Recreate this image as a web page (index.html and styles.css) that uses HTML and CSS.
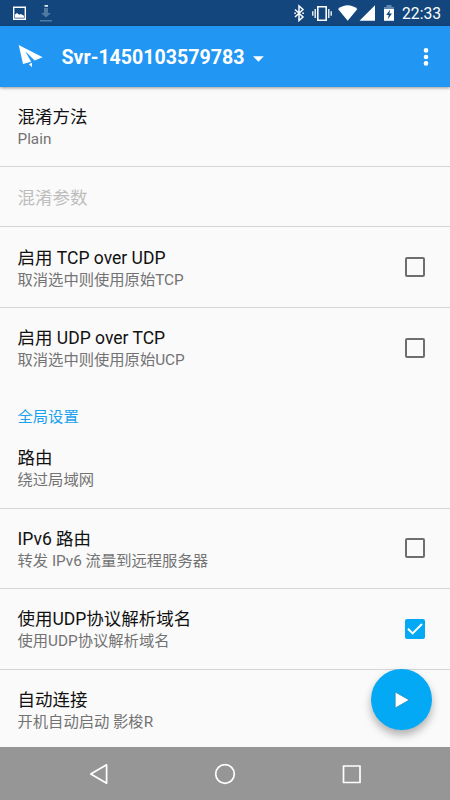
FILE: index.html
```html
<!DOCTYPE html>
<html lang="zh-CN">
<head>
<meta charset="utf-8">
<title>Svr-1450103579783</title>
<link rel="stylesheet" href="styles.css">
</head>
<body>
<div class="screen">
  <header class="status">
    <svg class="status-left" width="70" height="26" viewBox="0 0 70 26">
      <path d="M13.700 7.200h11.600v12H13.700z" fill="none" stroke="#fff" stroke-width="1.400"/>
      <path d="M15 17.800v-3.200l2-1.600 2.200 1.800 1.600-.8 3.200 1.800v2z" fill="#fff"/>
      <path d="M44 8h4v5h3l-5 4.500-5-4.500h3z" fill="#517aa3"/>
      <path d="M44.500 5h3.500v1.800h-3.500z" fill="#dce5ed"/>
      <path d="M40 20h12v1.500H40z" fill="#517aa3"/>
    </svg>
    <svg class="status-right" width="110" height="26" viewBox="290 0 110 26">
      <path d="M295 9.500l8 7.500-4 3.500V6l4 3.500-8 7.500" fill="none" stroke="#fff" stroke-width="1.500"/>
      <path d="M294.300 13.300h1.600M302.300 13.300h1.600" stroke="#fff" stroke-width="1.500"/>
      <path d="M317.800 6.800h8.400v13.400h-8.400z" fill="none" stroke="#fff" stroke-width="1.600"/>
      <path d="M315.200 9v9M312.800 11.200v4.600M328.800 9v9M331.200 11.200v4.600" stroke="#fff" stroke-width="1.300"/>
      <path d="M338 9q9.700-7.500 19.400 0l-9.700 11.700z" fill="#fff"/>
      <path d="M375 5.300v15.500h-15.500z" fill="#fff"/>
      <path d="M386.500 5h5v2h2.500v2h-10V7h2.500z" fill="#6488ad"/>
      <path d="M384 9h10v11.800h-10z" fill="#fff"/>
      <path d="M390.200 9.500l-4 5.500h2.500l-.8 4.300 4.100-5.700h-2.600z" fill="#12467d"/>
    </svg>
    <span class="clock">22:33</span>
  </header>
  <div class="toolbar">
    <svg class="logo" width="26" height="26" viewBox="0 0 26 26">
      <path d="M.7 1L24.700 13.200l-8 3.300L7.200 7.300l6 10.500-8.200 2.200z" fill="#fff"/>
      <path d="M10.800 20.300l3.200-1.500v4.500z" fill="#fff"/>
    </svg>
    <h1 class="profile">Svr-1450103579783</h1>
    <svg class="caret" width="11" height="6" viewBox="0 0 11 6"><path d="M0 .3h10.800L5.400 5.700z" fill="#fff"/></svg>
    <svg class="more" width="6" height="20" viewBox="0 0 6 20" fill="#fff"><circle cx="3" cy="3.400" r="2.300"/><circle cx="3" cy="10" r="2.300"/><circle cx="3" cy="16.400" r="2.300"/></svg>
  </div>
  <main class="list">
    <section class="row first"><div><p class="title">混淆方法</p><p class="sub">Plain</p></div></section>
    <section class="row short disabled"><div><p class="title">混淆参数</p></div></section>
    <section class="row low"><div><p class="title">启用 TCP over UDP</p><p class="sub">取消选中则使用原始TCP</p></div><span class="box"></span></section>
    <section class="row last"><div><p class="title">启用 UDP over TCP</p><p class="sub">取消选中则使用原始UCP</p></div><span class="box"></span></section>
    <h2 class="category">全局设置</h2>
    <section class="row"><div><p class="title">路由</p><p class="sub">绕过局域网</p></div></section>
    <section class="row tight"><div><p class="title">IPv6 路由</p><p class="sub">转发 IPv6 流量到远程服务器</p></div><span class="box"></span></section>
    <section class="row"><div><p class="title">使用UDP协议解析域名</p><p class="sub">使用UDP协议解析域名</p></div><span class="box checked"><svg width="20" height="20" viewBox="0 0 20 20"><path d="M3 9.800l4.600 4.600L17 5" fill="none" stroke="#fff" stroke-width="2"/></svg></span></section>
    <section class="row last"><div><p class="title">自动连接</p><p class="sub">开机自动启动 影梭R</p></div></section>
  </main>
  <nav class="nav">
    <svg width="450" height="53" viewBox="0 747 450 53" fill="none" stroke="#fff" stroke-width="1.700" stroke-linejoin="round">
      <path d="M106.600 764.800v18.400L90.800 774z"/>
      <circle cx="225" cy="774" r="9.300"/>
      <path d="M343.500 766h16.500v16.500h-16.500z"/>
    </svg>
  </nav>
  <div class="fab"><svg width="16" height="18" viewBox="0 0 16 18"><path d="M1.200 1v16L15.200 9z" fill="#fff" stroke="#2586b5" stroke-width=".7"/></svg></div>
</div>
</body>
</html>
```

FILE: styles.css
```css
* { box-sizing: border-box; margin: 0; padding: 0; }
body { width: 450px; height: 800px; overflow: hidden; }
.screen {
  position: relative;
  display: flex;
  flex-direction: column;
  height: 800px;
  background: #fafafa;
  font-family: Roboto, "Noto Sans CJK SC", sans-serif;
}
.status { display: flex; height: 26px; flex: none; background: #12467d; color: #fff; }
.status-right { margin-left: 220px; }
.clock { margin-left: 2px; font-size: 15.700px; line-height: 28px; }
.toolbar {
  z-index: 1;
  display: flex;
  align-items: center;
  flex: none;
  height: 61px;
  padding: 1px 21px 0 18px;
  background: #2196f3;
  box-shadow: 0 1px 3px rgba(0, 0, 0, .4);
  color: #fff;
}
.profile { margin: 2px 0 0 17.500px; font-size: 19.600px; line-height: 24px; font-weight: 700; }
.caret { margin: 3px 0 0 8px; }
.more { margin-left: auto; }
.list { flex: 1; min-height: 0; overflow: hidden; }
.row {
  display: flex;
  justify-content: space-between;
  height: 81px;
  padding: 19px 25px 0 17.500px;
  border-bottom: 1px solid #d5d5d5;
}
.first { height: 80px; }
.short { height: 60px; padding-top: 20px; }
.low { padding-top: 20px; }
.tight { height: 80px; }
.last { border-bottom-color: transparent; }
.title { color: #111; font-size: 17.500px; line-height: 22px; white-space: nowrap; }
.sub { color: #737373; font-size: 15.300px; line-height: 22px; white-space: nowrap; }
.disabled .title { color: #bdbdbd; }
.box { width: 20px; height: 20px; margin-top: 11px; border: 2px solid #6e6e6e; border-radius: 2px; }
.low .box, .tight .box { margin-top: 10px; }
.checked { border: 0; background: #03a9f4; }
.checked svg { display: block; }
.category {
  height: 39px;
  padding: 17px 0 0 17.500px;
  color: #1ba1ee;
  font-size: 15.300px;
  line-height: 22px;
  font-weight: 400;
}
.nav { flex: none; height: 53px; background: #969696; }
.nav svg { display: block; }
.fab {
  position: absolute;
  z-index: 2;
  left: 371px;
  top: 669px;
  display: flex;
  align-items: center;
  justify-content: center;
  width: 61px;
  height: 61px;
  border-radius: 50%;
  background: #03a9f4;
  box-shadow: 0 5px 9px rgba(0, 0, 0, .3);
}
```
